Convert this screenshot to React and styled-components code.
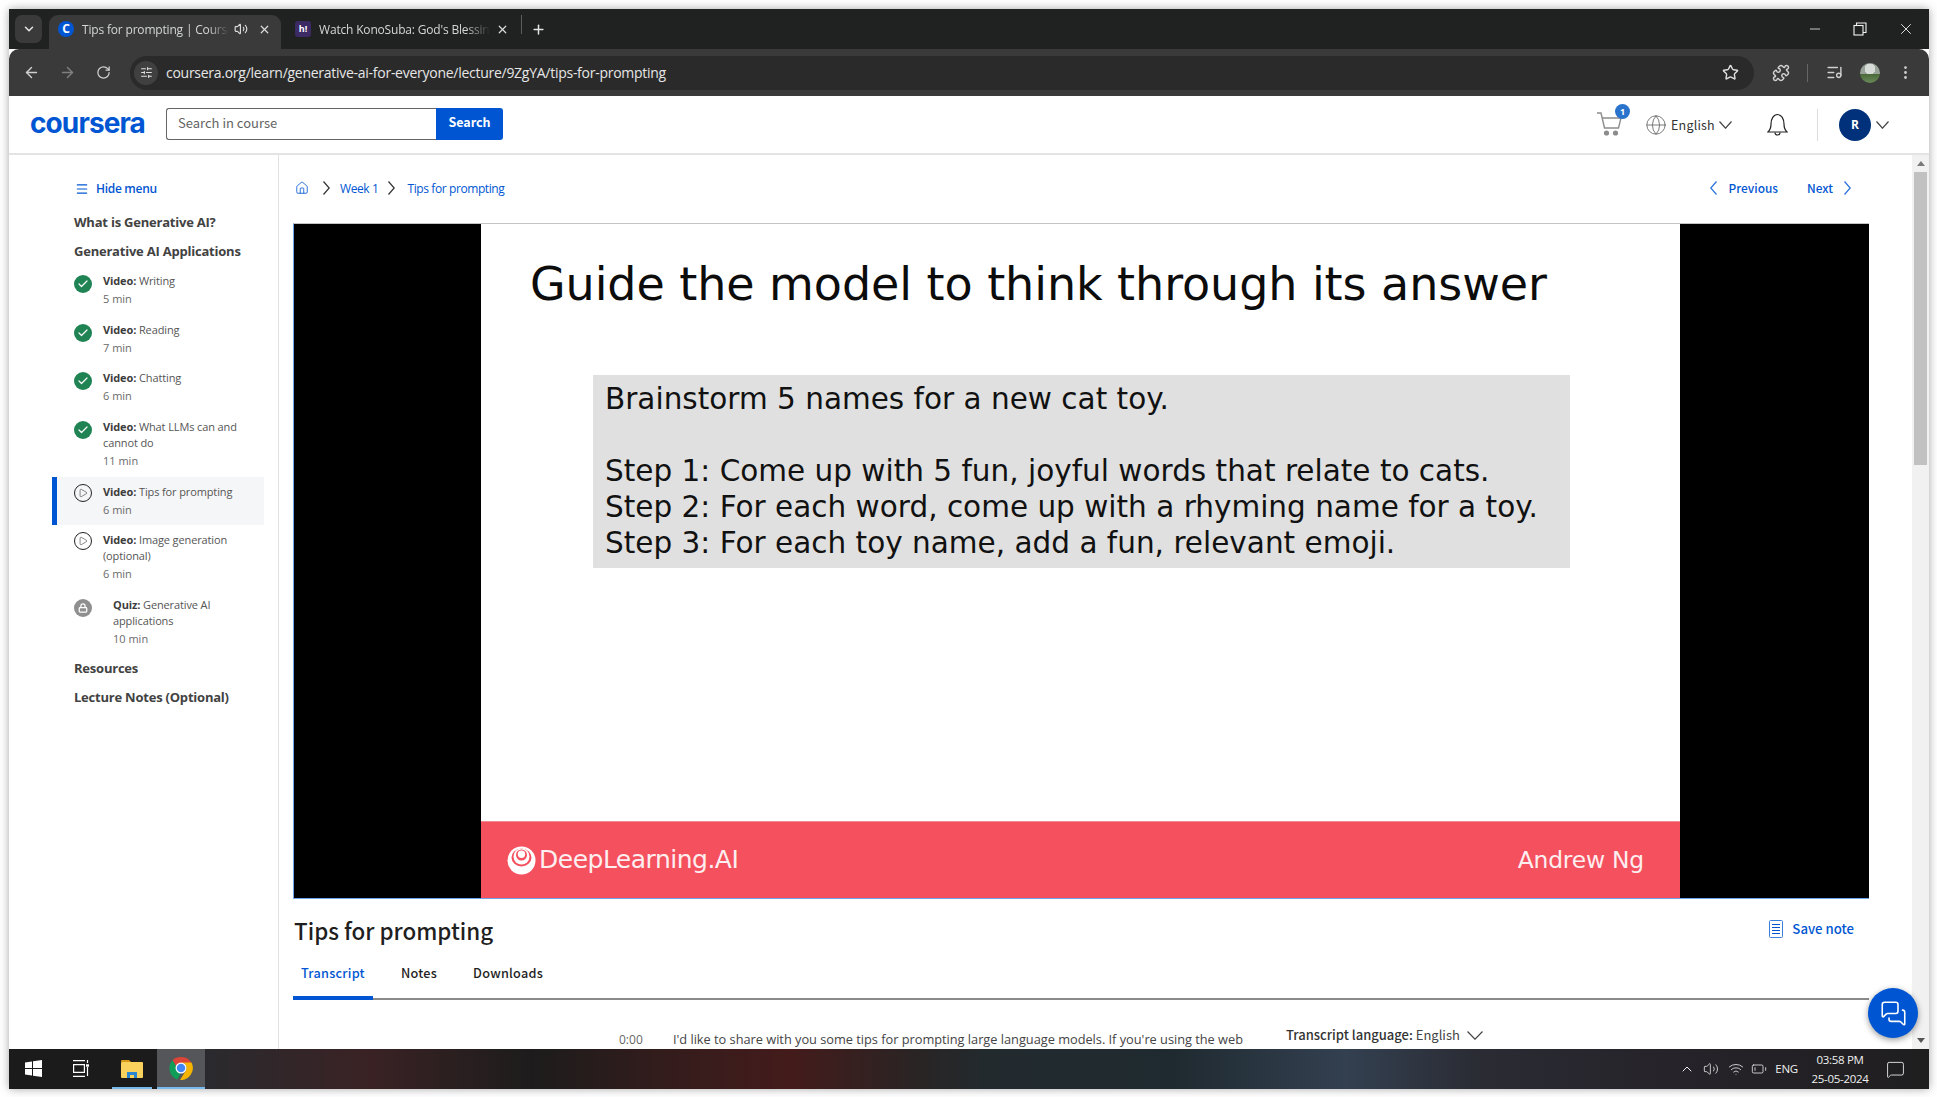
import React from "react";
import styled, { createGlobalStyle } from "styled-components";
import { Volume2, X, Plus, ArrowLeft, ArrowRight, RotateCw, Star, Minus, ChevronDown, ChevronUp, Menu, Home, Globe, Check, Play, Lock, ListMusic, Puzzle, EllipsisVertical, SlidersHorizontal, MessagesSquare, Wifi, BatteryLow, MessageSquare } from "lucide-react";

const SRC = `"Noto Sans CJK SC", "Open Sans", sans-serif`;
const OPEN = `"Open Sans", sans-serif`;
const SLIDE = `"DejaVu Sans", sans-serif`;
const BLUE = "#0056d2";

const Global = createGlobalStyle`
  html, body { margin: 0; padding: 0; background: #fff; }
  * { box-sizing: border-box; }
  #root { width: 1937px; height: 1097px; overflow: hidden; }
`;

const Desktop = styled.div`
  width: 1937px; height: 1097px; padding: 9px 8px 8px 9px; background: #fff;
`;
const Win = styled.div`
  width: 1920px; height: 1080px; display: flex; flex-direction: column; position: relative;
  box-shadow: 0 0 9px rgba(0,0,0,.35); overflow: hidden; background: #fff;
`;

/* Tab strip */
const TabStrip = styled.div`
  height: 40px; flex: none; background: #202221; display: flex; align-items: flex-start; padding: 6px 0 0 6px; color: #dcdcdc;
`;
const TabMenu = styled.div`
  width: 27px; height: 28px; border-radius: 7px; background: #3a3a3a; display: flex; align-items: center; justify-content: center; margin-right: 7px; color: #e8e8e8;
`;
const ActiveTab = styled.div`
  width: 232px; height: 34px; background: #3a3a3a; border-radius: 9px 9px 0 0; display: flex; align-items: center; padding: 0 0 6px 9px; position: relative;
`;
const InactiveTab = styled.div`
  width: 240px; height: 34px; display: flex; align-items: center; padding: 0 0 6px 14px;
`;
const TabFav = styled.div`
  width: 16px; height: 16px; flex: none; display: flex; align-items: center; justify-content: center; color: #fff;
  font: 700 ${p => p.$small ? 9 : 12}px/16px ${OPEN};
  background: ${p => p.$bg}; border-radius: ${p => p.$round ? "50%" : "3px"};
`;
const TabTitle = styled.div`
  width: ${p => p.$w}px; margin: 1px 0 0 8px; font: 400 12px/16px ${OPEN}; letter-spacing: -.18px; white-space: nowrap; overflow: hidden; color: #d4d6d6;
  -webkit-mask-image: linear-gradient(90deg, #000 86%, transparent);
  mask-image: linear-gradient(90deg, #000 86%, transparent);
`;
const TabIcon = styled.div`
  margin-left: ${p => p.$ml}px; display: flex; color: #dcdcdc;
`;
const TabDivider = styled.div`
  width: 1px; height: 19px; background: #5c5c5c; margin: 0 9px 6px 0;
`;
const NewTab = styled.div`
  display: flex; color: #e4e4e4; margin: 0; height: 28px; align-items: center;
`;
const WinControls = styled.div`
  margin-left: auto; display: flex; align-items: center; height: 28px; margin-top: 0; padding-right: 14px; gap: 30px; color: #f2f2f2;
`;

/* Toolbar */
const Toolbar = styled.div`
  height: 47px; flex: none; background: #3a3a3a; border-radius: 10px 10px 0 0; display: flex; align-items: center; padding-left: 4px; color: #c8c8c8; position: relative;
`;
const NavBtn = styled.div`
  width: 36px; display: flex; justify-content: center; color: ${p => p.$dim ? "#808080" : "#cfcfcf"};
`;
const Omni = styled.div`
  width: 1624px; height: 34px; margin-left: 9px; border-radius: 17px; background: #2a2a2a; display: flex; align-items: center; padding-left: 4px;
`;
const SiteIcon = styled.div`
  width: 24px; height: 24px; border-radius: 50%; background: #404040; display: flex; align-items: center; justify-content: center; color: #e0e0e0;
`;
const Url = styled.div`
  margin-left: 8px; font: 400 14px/18px ${OPEN}; letter-spacing: -.27px; color: #e6e6e6; white-space: nowrap;
`;
const StarWrap = styled.div`
  margin-left: auto; margin-right: 15px; display: flex; color: #e0e0e0;
`;
const ToolIcons = styled.div`
  display: flex; align-items: center; color: #d0d0d0; margin-left: 18px;
`;
const ToolDivider = styled.div`
  width: 1px; height: 18px; background: #666; margin: 0 18px 0 17px;
`;
const Profile = styled.div`
  width: 20px; height: 20px; border-radius: 50%; margin-left: 17px;
  background: radial-gradient(circle at 50% 30%, #d8dcd8 0 30%, transparent 31%), linear-gradient(180deg, #9aa39a 0 55%, #4a6a3a 56%, #6a8a5a);
`;
const MenuDots = styled.div`
  display: flex; margin-left: 17px;
`;

/* Page */
const Header = styled.header`
  height: 59px; flex: none; border-bottom: 2px solid #e3e3e3; display: flex; align-items: center; padding: 0 40px 2px 21px; background: #fff;
`;
const Logo = styled.div`
  font: 700 28px/30px Inter, sans-serif; letter-spacing: -.9px; color: ${BLUE}; width: 136px; margin-top: -2px;
`;
const SearchBox = styled.div`
  width: 270px; height: 32px; border: 1px solid #666; border-right: 0; border-radius: 3px 0 0 3px; padding-left: 11px; font: 400 13px/28px ${SRC}; color: #636363;
`;
const SearchBtn = styled.div`
  width: 67px; height: 32px; background: ${BLUE}; border-radius: 0 3px 3px 0; color: #fff; font: 700 12.5px/28px ${SRC}; text-align: center;
`;
const HeaderRight = styled.div`
  margin-left: auto; display: flex; align-items: center; height: 100%; padding-top: 2px;
`;
const Cart = styled.div`
  position: relative; display: flex; color: #8c8c8c; width: 26px; margin-right: 23px;
`;
const CartBadge = styled.div`
  position: absolute; left: 19px; top: -8px; width: 15px; height: 15px; border-radius: 50%; background: #2a73cc; color: #fff; font: 700 9px/15px ${OPEN}; text-align: center;
`;
const LangIcon = styled.div`
  display: flex; color: #6e6e6e; margin-right: 4px;
`;
const Lang = styled.div`
  width: 43px; font: 400 12.5px/18px ${SRC}; color: #333; margin-right: 5px; letter-spacing: .2px; white-space: nowrap;
`;
const BellWrap = styled.div`
  display: flex; color: #222; margin-left: 35px;
`;
const HDivider = styled.div`
  width: 1px; height: 32px; background: #dcdcdc; margin: 0 21px 0 29px;
`;
const Avatar = styled.div`
  width: 32px; height: 32px; border-radius: 50%; background: #00317a; color: #fff; font: 700 12px/32px ${OPEN}; text-align: center; margin-right: 5px;
`;

const Main = styled.div`
  flex: 1; min-height: 0; display: flex; background: #fff; position: relative; overflow: hidden;
`;
const Sidebar = styled.aside`
  width: 270px; flex: none; border-right: 1px solid #e1e1e1; padding: 24px 0 0 43px;
`;
const HideMenu = styled.div`
  display: flex; align-items: center; gap: 7px; padding-left: 23px; height: 20px; margin-bottom: 13px; color: ${BLUE}; font: 600 12px/20px ${OPEN}; letter-spacing: -.3px;
`;
const WeekTitle = styled.div`
  padding-left: 22px; font: 700 13px/20px ${OPEN}; letter-spacing: -.22px; color: #424242; margin-bottom: ${p => p.$mb ?? 9}px;
`;
const Item = styled.div`
  width: 212px; display: flex; align-items: flex-start; gap: ${p => p.$gap}px; padding: 8px 14px 6.7px 17px;
  border-left: 5px solid ${p => p.$active ? BLUE : "transparent"};
  background: ${p => p.$active ? "#f5f6f8" : "transparent"};
`;
const ItemIcon = styled.div`
  width: 18px; height: 18px; flex: none; margin-top: ${p => p.$mt}px; border-radius: 50%; display: flex; align-items: center; justify-content: center;
  color: ${p => p.$outline ? "#222" : "#fff"}; background: ${p => p.$bg || "transparent"};
  border: ${p => p.$outline ? "1px solid #222" : "0"};
`;
const ItemBody = styled.div`
  flex: 1; min-width: 0; margin-top: -1px;
`;
const ItemTitle = styled.div`
  font: 400 11px/16px ${OPEN}; color: #555; letter-spacing: -.12px;
  b { font-weight: 700; color: #3d3d3d; }
`;
const ItemMin = styled.div`
  font: 400 11px/18px ${OPEN}; color: #6a6a6a; padding-top: 1px;
`;
const Extra = styled.div`
  height: ${p => p.$h}px;
`;

const Content = styled.main`
  flex: 1; min-width: 0; padding: 22px 43px 0 14px; display: flex; flex-direction: column;
`;
const Crumbs = styled.div`
  height: 22px; flex: none; display: flex; align-items: center; color: ${BLUE}; font: 400 12px/22px ${OPEN}; letter-spacing: -.4px; margin-bottom: 24px; padding-left: 2px;
`;
const CrumbText = styled.span`
  padding-top: 2px;
`;
const CrumbSep = styled.div`
  display: flex; color: #333; margin: 0 ${p => p.$mr}px 0 ${p => p.$ml}px;
`;
const Pager = styled.div`
  margin-left: auto; display: flex; align-items: center; padding-right: 18px; font: 500 11.9px/22px ${SRC}; letter-spacing: 0; color: ${BLUE};
`;
const PagerGap = styled.div`
  width: ${p => p.$w}px;
`;
const Video = styled.div`
  height: 676px; flex: none; display: flex; background: #000; border-left: 1px solid #6ea5ea; border-bottom: 1px solid #6ea5ea; border-top: 1px solid #c4c4c4;
`;
const Bar = styled.div`
  flex: ${p => p.$w ? "none" : 1}; width: ${p => p.$w ? `${p.$w}px` : "auto"}; background: #000;
`;
const Slide = styled.div`
  width: 1199px; flex: none; background: #fff; display: flex; flex-direction: column;
`;
const SlideTitle = styled.div`
  font: 400 46px/60px ${SLIDE}; letter-spacing: -.07px; color: #0c0c0c; padding: 30px 0 0 49px; white-space: nowrap; height: 151px;
`;
const PromptBox = styled.div`
  width: 977px; height: 193px; margin-left: 112px; background: #e0e0e0; padding: 6px 0 0 12px; font: 400 29.5px/36px ${SLIDE}; letter-spacing: 0; color: #111; white-space: nowrap;
`;
const Brand = styled.div`
  margin-top: auto; height: 77px; background: #f5505e; display: flex; align-items: center; justify-content: space-between; padding: 0 36px 0 26px; color: #fdeef0;
  border-top: 1px solid #f08a92;
`;
const BrandLeft = styled.div`
  display: flex; align-items: center; gap: 3px; font: 400 25px/34px ${SLIDE}; letter-spacing: -.5px;
`;
const BrandRight = styled.div`
  font: 400 23.4px/34px ${SLIDE}; letter-spacing: -.2px;
`;

const TitleRow = styled.div`
  height: 32px; flex: none; margin-top: 15px; display: flex; align-items: center; justify-content: space-between; padding-left: 1px; padding-right: 15px;
`;
const H1 = styled.h1`
  margin: 0; font: 500 22.4px/32px ${SRC}; color: #1f1f1f;
`;
const SaveNote = styled.div`
  display: flex; align-items: center; gap: 9px; color: ${BLUE}; font: 500 13.2px/18px ${SRC}; margin-top: -2px;
`;
const Tabs = styled.div`
  height: 54px; flex: none; display: flex; gap: 20px; border-bottom: 2px solid #8a8a8a;
`;
const Tab = styled.div`
  padding: 17px 8px 0; height: 54px; font: 500 12.7px/20px ${SRC}; letter-spacing: .25px; color: ${p => p.$active ? BLUE : "#1f1f1f"};
  border-bottom: 4px solid ${p => p.$active ? BLUE : "transparent"};
`;
const Transcript = styled.div`
  display: flex; align-items: flex-start; padding: 26px 0 0 326px; white-space: nowrap;
`;
const Stamp = styled.div`
  width: 54px; font: 400 12px/20px ${OPEN}; color: #666; padding-top: 4px;
`;
const Line = styled.div`
  width: 613px; font: 400 12.8px/20px ${OPEN}; color: #444; padding-top: 3px; letter-spacing: -.02px;
`;
const LangPick = styled.div`
  display: flex; align-items: center; gap: 7px; font: 400 13px/20px ${SRC}; color: #444; margin-top: -1px;
  b { font-weight: 500; color: #333; }
`;

const Scrollbar = styled.div`
  width: 17px; flex: none; background: #f1f1f1; display: flex; flex-direction: column; align-items: center; padding-top: 17px;
`;
const Thumb = styled.div`
  width: 13px; height: 293px; background: #c1c1c1;
`;
const ArrowUp = styled.div`
  position: absolute; right: 4px; top: 6px; width: 0; height: 0; border: 4px solid transparent; border-top: 0; border-bottom: 5px solid #7a7a7a;
`;
const ArrowDown = styled.div`
  position: absolute; right: 4px; bottom: 6px; width: 0; height: 0; border: 4px solid transparent; border-bottom: 0; border-top: 5px solid #555;
`;
const Chat = styled.div`
  position: absolute; right: 11px; bottom: 11px; width: 50px; height: 50px; border-radius: 50%; background: ${BLUE}; color: #fff; display: flex; align-items: center; justify-content: center; box-shadow: 0 2px 6px rgba(0,0,0,.4);
`;

/* Taskbar */
const Taskbar = styled.footer`
  height: 40px; flex: none; display: flex; align-items: stretch; color: #f2f2f2;
  background: linear-gradient(90deg, #1b1b1b 0, #1b1b1b 148px, #2a2a2e 196px, #3a2224 360px, #1d1c1c 522px, #341c1c 658px, #441b1b 781px, #2a2424 905px, #222a2e 979px, #1f2a30 1164px, #334050 1337px, #2a2b33 1473px, #26232a 1658px, #1f1e1f 1920px);
`;
const TaskCell = styled.div`
  width: ${p => p.$w}px; margin-left: ${p => p.$ml || 0}px; display: flex; align-items: center; justify-content: center;
  background: ${p => p.$active ? "#555659" : "transparent"};
  border-bottom: 2px solid ${p => p.$on ? "#76b9ed" : "transparent"};
`;
const Tray = styled.div`
  margin-left: auto; display: flex; align-items: center; padding-right: 24px; color: #f0f0f0;
`;
const TrayIcon = styled.div`
  display: flex; margin-right: ${p => p.$mr}px;
`;
const TrayText = styled.div`
  font: 400 11.5px/16px ${OPEN}; letter-spacing: -.2px; margin-right: 12px;
`;
const Clock = styled.div`
  font: 400 11.5px/19px ${OPEN}; letter-spacing: -.3px; text-align: center; width: 60px; margin-right: 16px;
`;

const Caret = ({ w = 13, h = 8, dir = "down", color = "#444", sw = 1.2 }) => {
  const pts = {
    down: `0.5,0.5 ${w / 2},${h - 0.8} ${w - 0.5},0.5`,
    left: `${w - 0.5},0.5 0.8,${h / 2} ${w - 0.5},${h - 0.5}`,
    right: `0.5,0.5 ${w - 0.8},${h / 2} 0.5,${h - 0.5}`,
  }[dir];
  return (
    <svg width={w} height={h} viewBox={`0 0 ${w} ${h}`} fill="none" stroke={color} strokeWidth={sw}>
      <polyline points={pts} />
    </svg>
  );
};
const NoteIcon = () => (
  <svg width="14" height="18" viewBox="0 0 14 18" fill="none" stroke="#3a7fdc" strokeWidth="1">
    <rect x=".5" y=".5" width="13" height="17" rx="1" />
    <path d="M3 4.500h8M3 7.500h8M3 10.500h8M3 13.500h8" stroke="#0056d2" />
  </svg>
);
const CartIcon = () => (
  <svg width="26" height="25" viewBox="0 0 26 25" fill="none" stroke="#8c8c8c" strokeWidth="1.4">
    <path d="M1 1h4l3.500 15h14l2.500-10H6" />
    <circle cx="10.500" cy="21" r="2.600" fill="#8c8c8c" stroke="none" />
    <circle cx="19.500" cy="21" r="2.600" fill="#8c8c8c" stroke="none" />
  </svg>
);
const BellIcon = () => (
  <svg width="21" height="23" viewBox="0 0 21 23" fill="none" stroke="#222" strokeWidth="1.2">
    <path d="M1 19c2.400-2.200 3-4 3-8 0-5 2.500-9.500 6.500-9.500S17 6 17 11c0 4 .6 5.800 3 8z" />
    <path d="M8 19.500c0 3.300 5 3.300 5 0" />
  </svg>
);
const WinLogo = () => (
  <svg width="17" height="17" viewBox="0 0 17 17" fill="#fff">
    <path d="M0 2.400 7 1.400V8H0zM8 1.300 17 0v8H8zM0 9h7v6.600L0 14.600zM8 9h9v8l-9-1.300z" />
  </svg>
);
const TaskView = () => (
  <svg width="16" height="17" viewBox="0 0 16 17" fill="none" stroke="#fff" strokeWidth="1.200">
    <path d="M0 .6h12M0 16.400h12M.6 4.600h10.800v7.800H.6zM14.500 0v3M14.500 7v9" />
    <rect x="13" y="4.300" width="3" height="2.400" fill="#fff" stroke="none" />
  </svg>
);
const Explorer = () => (
  <svg width="22" height="19" viewBox="0 0 22 19">
    <path d="M0 2a1 1 0 0 1 1-1h7l2 2h-10z" fill="#d99a18" />
    <rect x="0" y="3" width="22" height="16" rx="1" fill="#f9d25e" />
    <path d="M6 19v-6h10v6h-3v-3h-4v3z" fill="#2a86d1" />
  </svg>
);
const ChromeLogo = () => (
  <svg width="24" height="24" viewBox="0 0 48 48">
    <path d="M24 2a22 22 0 0 1 20.800 12H24a10 10 0 0 0-9.500 6.900L7 8.500A22 22 0 0 1 24 2z" fill="#db4437" />
    <path d="M7 8.500 15.500 23A10 10 0 0 0 24 34l-7.500 13A24 24 0 0 1 7 8.500z" fill="#0f9d58" />
    <path d="M45 13H24a11 11 0 0 1 9.500 16.500L22 48A24 24 0 0 0 45 13z" fill="#f4b400" />
    <circle cx="24" cy="24" r="11" fill="#fff" />
    <circle cx="24" cy="24" r="8.500" fill="#4285f4" />
  </svg>
);
const DlLogo = () => (
  <svg width="29" height="29" viewBox="0 0 29 29">
    <circle cx="14.500" cy="14.500" r="14" fill="#fff" />
    <ellipse cx="14.500" cy="11.500" rx="10" ry="9" fill="#f5505e" />
    <ellipse cx="14.500" cy="10.500" rx="8" ry="8" fill="#fff" />
    <circle cx="14.500" cy="9" r="5.500" fill="#f5505e" />
    <circle cx="14.500" cy="8.300" r="3.700" fill="#fff" />
  </svg>
);

const items = [
  { state: "done", label: "Video:", title: "Writing", min: "5 min" },
  { state: "done", label: "Video:", title: "Reading", min: "7 min" },
  { state: "done", label: "Video:", title: "Chatting", min: "6 min" },
  { state: "done", label: "Video:", title: "What LLMs can and cannot do", min: "11 min" },
  { state: "play", label: "Video:", title: "Tips for prompting", min: "6 min", active: true },
  { state: "play", label: "Video:", title: "Image generation (optional)", min: "6 min" },
  { state: "lock", label: "Quiz:", title: "Generative AI applications", min: "10 min" },
];

const StatusIcon = ({ state }) => {
  if (state === "done") return <ItemIcon $mt={1} $bg="#1f8354"><Check size={12} strokeWidth={2.4} /></ItemIcon>;
  if (state === "lock") return <ItemIcon $mt={1} $bg="#8f8f8f"><Lock size={10} strokeWidth={3} /></ItemIcon>;
  return <ItemIcon $mt={-1} $outline><Play size={10} strokeWidth={1.3} /></ItemIcon>;
};

export default function App() {
  return (
    <Desktop>
      <Global />
      <Win>
        <TabStrip>
          <TabMenu><ChevronDown size={14} strokeWidth={2.5} /></TabMenu>
          <ActiveTab>
            <TabFav $bg="#0056d2" $round>C</TabFav>
            <TabTitle $w={147}>Tips for prompting | Coursera</TabTitle>
            <TabIcon $ml={5}><Volume2 size={14} /></TabIcon>
            <TabIcon $ml={10}><X size={13} strokeWidth={2.2} /></TabIcon>
          </ActiveTab>
          <InactiveTab>
            <TabFav $bg="#3b2a63" $small>h!</TabFav>
            <TabTitle $w={171}>Watch KonoSuba: God's Blessing</TabTitle>
            <TabIcon $ml={6}><X size={13} strokeWidth={2.2} /></TabIcon>
          </InactiveTab>
          <TabDivider />
          <NewTab><Plus size={15} strokeWidth={2.4} /></NewTab>
          <WinControls>
            <Minus size={16} strokeWidth={1.2} />
            <svg width="14" height="14" viewBox="0 0 14 14" fill="none" stroke="#f2f2f2" strokeWidth="1.100"><rect x="1" y="3.500" width="9" height="9.500" /><path d="M3.500 3.500V1H13v9.500h-3" /></svg>
            <X size={18} strokeWidth={1.2} />
          </WinControls>
        </TabStrip>
        <Toolbar>
          <NavBtn><ArrowLeft size={17} /></NavBtn>
          <NavBtn $dim><ArrowRight size={17} /></NavBtn>
          <NavBtn><RotateCw size={15} /></NavBtn>
          <Omni>
            <SiteIcon><SlidersHorizontal size={13} /></SiteIcon>
            <Url>coursera.org/learn/generative-ai-for-everyone/lecture/9ZgYA/tips-for-prompting</Url>
            <StarWrap><Star size={17} /></StarWrap>
          </Omni>
          <ToolIcons>
            <Puzzle size={18} />
            <ToolDivider />
            <ListMusic size={17} />
            <Profile />
            <MenuDots><EllipsisVertical size={17} /></MenuDots>
          </ToolIcons>
        </Toolbar>

        <Header>
          <Logo>coursera</Logo>
          <SearchBox>Search in course</SearchBox>
          <SearchBtn>Search</SearchBtn>
          <HeaderRight>
            <Cart><CartIcon /><CartBadge>1</CartBadge></Cart>
            <LangIcon><Globe size={22} strokeWidth={1} /></LangIcon>
            <Lang>English</Lang>
            <Caret />
            <BellWrap><BellIcon /></BellWrap>
            <HDivider />
            <Avatar>R</Avatar>
            <Caret />
          </HeaderRight>
        </Header>

        <Main>
          <Sidebar>
            <HideMenu><Menu size={14} strokeWidth={2} />Hide menu</HideMenu>
            <WeekTitle>What is Generative AI?</WeekTitle>
            <WeekTitle $mb={5}>Generative AI Applications</WeekTitle>
            {items.map((it) => (
              <Item key={it.title} $active={it.active} $gap={it.state === "lock" ? 21 : 11}>
                <StatusIcon state={it.state} />
                <ItemBody>
                  <ItemTitle><b>{it.label}</b> {it.title}</ItemTitle>
                  <ItemMin>{it.min}</ItemMin>
                </ItemBody>
              </Item>
            ))}
            <Extra $h={3} />
            <WeekTitle>Resources</WeekTitle>
            <WeekTitle>Lecture Notes (Optional)</WeekTitle>
          </Sidebar>

          <Content>
            <Crumbs>
              <Home size={14} strokeWidth={1.4} />
              <CrumbSep $ml={14} $mr={10}><Caret dir="right" w={7} h={14} color="#333" /></CrumbSep>
              <CrumbText>Week 1</CrumbText>
              <CrumbSep $ml={10} $mr={12}><Caret dir="right" w={7} h={14} color="#333" /></CrumbSep>
              <CrumbText>Tips for prompting</CrumbText>
              <Pager>
                <Caret dir="left" w={7} h={14} color="#2a73dc" />
                <PagerGap $w={12} />
                Previous
                <PagerGap $w={29} />
                Next
                <PagerGap $w={11} />
                <Caret dir="right" w={7} h={14} color="#2a73dc" />
              </Pager>
            </Crumbs>

            <Video>
              <Bar $w={187} />
              <Slide>
                <SlideTitle>Guide the model to think through its answer</SlideTitle>
                <PromptBox>
                  Brainstorm 5 names for a new cat toy.<br /><br />
                  Step 1: Come up with 5 fun, joyful words that relate to cats.<br />
                  Step 2: For each word, come up with a rhyming name for a toy.<br />
                  Step 3: For each toy name, add a fun, relevant emoji.
                </PromptBox>
                <Brand>
                  <BrandLeft><DlLogo />DeepLearning.AI</BrandLeft>
                  <BrandRight>Andrew Ng</BrandRight>
                </Brand>
              </Slide>
              <Bar />
            </Video>

            <TitleRow>
              <H1>Tips for prompting</H1>
              <SaveNote><NoteIcon />Save note</SaveNote>
            </TitleRow>
            <Tabs>
              <Tab $active>Transcript</Tab>
              <Tab>Notes</Tab>
              <Tab>Downloads</Tab>
            </Tabs>
            <Transcript>
              <Stamp>0:00</Stamp>
              <Line>I'd like to share with you some tips for prompting large language models. If you're using the web</Line>
              <LangPick><span><b>Transcript language:</b> English</span><Caret w={16} h={9} /></LangPick>
            </Transcript>
          </Content>

          <Scrollbar><ArrowUp /><Thumb /><ArrowDown /></Scrollbar>
          <Chat><MessagesSquare size={27} strokeWidth={1.4} /></Chat>
        </Main>

        <Taskbar>
          <TaskCell $w={48}><WinLogo /></TaskCell>
          <TaskCell $w={48}><TaskView /></TaskCell>
          <TaskCell $w={40} $ml={7} $on><Explorer /></TaskCell>
          <TaskCell $w={48} $ml={5} $on $active><ChromeLogo /></TaskCell>
          <Tray>
            <TrayIcon $mr={8}><ChevronUp size={16} strokeWidth={1.5} /></TrayIcon>
            <TrayIcon $mr={9}><Volume2 size={16} strokeWidth={1.2} /></TrayIcon>
            <TrayIcon $mr={7}><Wifi size={16} strokeWidth={1.2} /></TrayIcon>
            <TrayIcon $mr={8}><BatteryLow size={16} strokeWidth={1.2} /></TrayIcon>
            <TrayText>ENG</TrayText>
            <Clock>03:58 PM<br />25-05-2024</Clock>
            <MessageSquare size={19} strokeWidth={1.1} />
          </Tray>
        </Taskbar>
      </Win>
    </Desktop>
  );
}
